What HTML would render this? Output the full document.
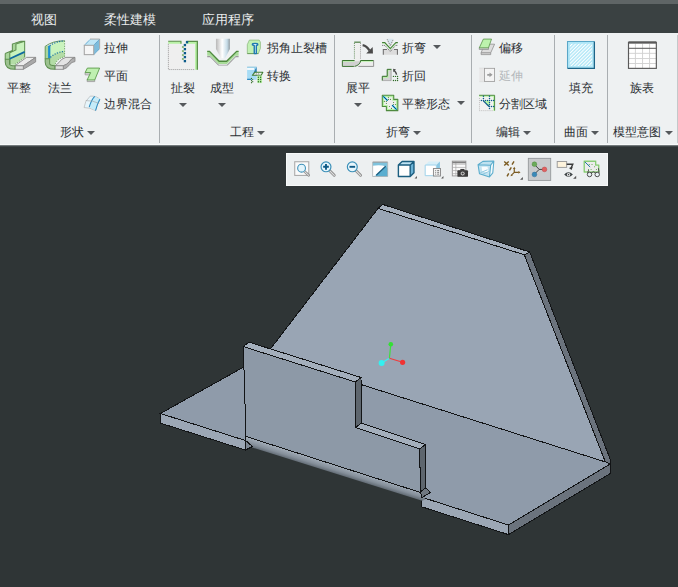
<!DOCTYPE html>
<html><head><meta charset="utf-8">
<style>
*{margin:0;padding:0;box-sizing:border-box}
html,body{width:678px;height:587px;overflow:hidden;background:#2f3536;font-family:"Liberation Sans",sans-serif}
.abs{position:absolute}
#topstrip{left:0;top:0;width:678px;height:4px;background:#5f6566}
#tabbar{left:0;top:4px;width:678px;height:29px;background:#3a4142}
.tab{position:absolute;top:8px;font-size:13px;line-height:15px;color:#e9eced;white-space:nowrap}
#ribbon{left:0;top:33px;width:678px;height:112px;background:#eef1f2;border-bottom:1px solid #f8fafa}
.sep{position:absolute;top:35px;width:1px;height:108px;background:#a9aeb1}
.t{position:absolute;font-size:12px;line-height:14px;color:#2b2f33;white-space:nowrap}
.dis{color:#b4b8bb}
.arr{position:absolute;width:0;height:0;border-left:4px solid transparent;border-right:4px solid transparent;border-top:4px solid #55595c}
svg.ic{position:absolute;overflow:visible}
#canvas{left:0;top:145px;width:678px;height:442px;background:#2f3536}
#vtb{left:286px;top:153px;width:322px;height:33px;background:#edf0f1;border:1px solid #f7f9f9}
</style></head>
<body>
<div id="topstrip" class="abs"></div>
<div id="tabbar" class="abs">
  <span class="tab" style="left:31px">视图</span>
  <span class="tab" style="left:104px">柔性建模</span>
  <span class="tab" style="left:202px">应用程序</span>
</div>
<div id="ribbon" class="abs"></div>
<div id="canvas" class="abs"></div>
<div class="abs" style="left:0;top:145px;width:678px;height:1px;background:#737a7c"></div>
<div class="abs" style="left:0;top:146px;width:678px;height:1px;background:#3f4647"></div>

<!-- separators -->
<div class="sep" style="left:159px"></div>
<div class="sep" style="left:334px"></div>
<div class="sep" style="left:471px"></div>
<div class="sep" style="left:554px"></div>
<div class="sep" style="left:607px"></div>
<div class="sep" style="left:677px;background:#c4c8ca"></div>

<!-- group labels & text -->
<span class="t" style="left:7px;top:81px">平整</span>
<span class="t" style="left:48px;top:81px">法兰</span>
<span class="t" style="left:104px;top:41px">拉伸</span>
<span class="t" style="left:104px;top:69px">平面</span>
<span class="t" style="left:104px;top:97px">边界混合</span>
<span class="t" style="left:60px;top:125px">形状</span><div class="arr" style="left:87px;top:131px"></div>

<span class="t" style="left:171px;top:81px">扯裂</span><div class="arr" style="left:179px;top:103px"></div>
<span class="t" style="left:210px;top:81px">成型</span><div class="arr" style="left:218px;top:103px"></div>
<span class="t" style="left:267px;top:41px">拐角止裂槽</span>
<span class="t" style="left:267px;top:69px">转换</span>
<span class="t" style="left:230px;top:125px">工程</span><div class="arr" style="left:257px;top:131px"></div>

<span class="t" style="left:346px;top:81px">展平</span><div class="arr" style="left:354px;top:103px"></div>
<span class="t" style="left:402px;top:41px">折弯</span><div class="arr" style="left:433px;top:45px"></div>
<span class="t" style="left:402px;top:69px">折回</span>
<span class="t" style="left:402px;top:97px">平整形态</span><div class="arr" style="left:457px;top:101px"></div>
<span class="t" style="left:386px;top:125px">折弯</span><div class="arr" style="left:413px;top:131px"></div>

<span class="t" style="left:499px;top:41px">偏移</span>
<span class="t dis" style="left:499px;top:69px">延伸</span>
<span class="t" style="left:499px;top:97px">分割区域</span>
<span class="t" style="left:496px;top:125px">编辑</span><div class="arr" style="left:523px;top:131px"></div>

<span class="t" style="left:569px;top:81px">填充</span>
<span class="t" style="left:564px;top:125px">曲面</span><div class="arr" style="left:591px;top:131px"></div>

<span class="t" style="left:630px;top:81px">族表</span>
<span class="t" style="left:613px;top:125px">模型意图</span><div class="arr" style="left:665px;top:131px"></div>


<!-- ribbon icons -->
<!-- 平整 -->
<svg class="ic" style="left:2px;top:36px" width="38" height="38" viewBox="0 0 587 587">
 <path d="M200 460 L330 460 L520 330 L380 330 Z" fill="#ececec" stroke="#8a8a8a" stroke-width="14"/>
 <path d="M330 460 L520 330 L520 400 L330 515 Z" fill="#a9a9a9" stroke="#8a8a8a" stroke-width="14"/>
 <path d="M200 460 L330 460 L330 515 L200 515 Z" fill="#e2e2e2" stroke="#8a8a8a" stroke-width="14"/>
 <path d="M120 260 L215 215 L215 125 L350 80 L350 330 L200 440 L120 440 Z" fill="#c9f3bd"/>
 <path d="M120 350 L350 245 L350 330 L200 440 L120 440 Z" fill="#b3dca6"/>
 <path d="M50 270 L120 260 L120 440 L50 440 Z" fill="#a9d69c"/>
 <path d="M160 125 L215 125 L215 215 L160 225 Z" fill="#a9d69c"/>
 <path d="M50 270 L160 225 L215 215 L120 260 Z M160 125 L290 80 L350 80 L215 125 Z" fill="#bfe8b1"/>
 <path d="M50 360 L120 360 L120 440 Q120 460 200 460 L200 515 Q50 515 50 400 Z" fill="#9cc28f" stroke="#5d8f4f" stroke-width="16"/>
 <path d="M50 270 L50 360 M120 260 L120 440 M50 270 L160 225 L160 125 L290 80 L350 80 L350 330 M120 260 L215 215 L215 125 L350 80" fill="none" stroke="#5d8f4f" stroke-width="16"/>
 <path d="M120 350 L350 245" stroke="#0f6aa0" stroke-width="26"/>
 <path d="M200 440 L350 330" stroke="#5d8f4f" stroke-width="12" stroke-dasharray="18 22"/>
</svg>
<!-- 法兰 -->
<svg class="ic" style="left:40px;top:36px" width="38" height="38" viewBox="0 0 587 587">
 <path d="M230 460 L360 460 Q420 440 450 400 Q480 350 540 330 L400 330 Q330 350 300 400 Q270 440 230 460 Z" fill="#e4e4e4" stroke="#8a8a8a" stroke-width="14"/>
 <path d="M360 460 Q420 440 450 400 Q480 350 540 330 L540 395 Q490 400 460 440 Q420 500 360 515 Z" fill="#b0b0b0" stroke="#8a8a8a" stroke-width="14"/>
 <path d="M230 460 L360 460 L360 515 L230 515 Z" fill="#e2e2e2" stroke="#8a8a8a" stroke-width="14"/>
 <path d="M150 150 Q250 80 380 75 L380 320 Q230 360 230 460 L150 460 Z" fill="#c9f3bd"/>
 <path d="M160 330 Q260 240 380 240 L380 320 Q230 360 230 460 L160 460 Z" fill="#b3dca6"/>
 <path d="M80 160 L150 150 L150 360 L80 360 Z" fill="#a9d69c"/>
 <path d="M125 150 L160 150 L160 350 L125 350 Z" fill="#1e8fd0"/>
 <path d="M80 350 L150 350 L150 430 Q150 460 230 460 L230 515 Q80 515 80 400 Z" fill="#9cc28f" stroke="#5d8f4f" stroke-width="16"/>
 <path d="M80 160 L80 350 M80 160 Q200 70 380 75" fill="none" stroke="#5d8f4f" stroke-width="14"/>
 <path d="M150 150 Q250 80 380 75 M160 330 Q260 240 380 240" fill="none" stroke="#0f6aa0" stroke-width="18" stroke-dasharray="18 22"/>
 <path d="M380 75 L380 320 Q260 350 230 450" fill="none" stroke="#5d8f4f" stroke-width="14" stroke-dasharray="16 22"/>
</svg>
<!-- 拉伸 -->
<svg class="ic" style="left:80px;top:36px" width="24" height="24" viewBox="0 0 587 587">
 <path d="M100 225 L245 75 L480 75 L335 225 Z" fill="#bfe6f6"/>
 <path d="M335 225 L480 75 L480 310 L335 460 Z" fill="#7dbcdc"/>
 <path d="M245 75 L480 75 L480 310" fill="none" stroke="#a8a8a8" stroke-width="24"/>
 <path d="M110 225 L245 85 M340 220 L475 85 M340 455 L475 315" stroke="#3f8fbf" stroke-width="22" stroke-dasharray="24 16"/>
 <rect x="105" y="228" width="230" height="228" fill="#f6f6f6" stroke="#a6a6a6" stroke-width="26"/>
</svg>
<!-- 平面 -->
<svg class="ic" style="left:80px;top:64px" width="24" height="24" viewBox="0 0 587 587">
 <path d="M175 380 L360 380 L360 430 L175 430 Z M125 215 L255 215 L255 265 L125 265 Z" fill="#e8e8e8" stroke="#8e8e8e" stroke-width="18"/>
 <path d="M180 100 L480 100 L360 390 L175 390 L260 210 L125 210 Z" fill="#bff0b0" stroke="#5a9a4a" stroke-width="22" stroke-linejoin="round"/>
</svg>
<!-- 边界混合 -->
<svg class="ic" style="left:80px;top:92px" width="24" height="24" viewBox="0 0 587 587">
 <path d="M250 100 Q420 95 485 180 Q420 300 380 455 Q250 380 100 380 Q110 220 250 100 Z" fill="#e6f5fb" stroke="#b0b0b0" stroke-width="16"/>
 <path d="M260 230 Q320 140 360 110 L485 180 Q420 300 380 455 L225 370 Z" fill="#c5ebf8"/>
 <path d="M360 110 Q280 190 225 370 M485 180 Q420 300 380 455" fill="none" stroke="#2a8ac0" stroke-width="26"/>
 <path d="M140 210 Q300 200 470 280" fill="none" stroke="#a0a0a0" stroke-width="14"/>
</svg>
<!-- 扯裂 -->
<svg class="ic" style="left:164px;top:36px" width="38" height="38" viewBox="0 0 587 587">
 <rect x="65" y="85" width="455" height="435" fill="#efefef"/>
 <path d="M68 120 L68 518 L480 518" fill="none" stroke="#8a8a8a" stroke-width="14" stroke-dasharray="14 17"/>
 <path d="M65 85 L270 85 L270 120 L65 120 Z" fill="#b9f2a6"/>
 <path d="M65 82 L270 82 M262 82 L262 120" stroke="#5b8f4a" stroke-width="16" fill="none"/>
 <path d="M345 85 L520 85 L520 520 L480 520 L480 120 L345 120 Z" fill="#b9f2a6"/>
 <path d="M345 82 L515 82 L515 520" stroke="#5b8f4a" stroke-width="20" fill="none"/>
 <g fill="#0c5a8a"><rect x="338" y="78" width="36" height="36"/><rect x="305" y="122" width="36" height="36"/><rect x="305" y="185" width="36" height="36"/><rect x="305" y="247" width="36" height="36"/><rect x="305" y="308" width="36" height="36"/><rect x="305" y="370" width="36" height="36"/></g>
 <g fill="#8ab97c"><rect x="277" y="155" width="30" height="30"/><rect x="277" y="218" width="30" height="30"/><rect x="277" y="280" width="30" height="30"/><rect x="277" y="340" width="30" height="30"/></g>
</svg>
<!-- 成型 -->
<svg class="ic" style="left:203px;top:34px" width="38" height="38" viewBox="0 0 587 587">
 <defs><linearGradient id="punch" x1="0" x2="1"><stop offset="0" stop-color="#b8b8b8"/><stop offset="0.45" stop-color="#ffffff"/><stop offset="0.8" stop-color="#c6dce8"/><stop offset="1" stop-color="#8f9aa0"/></linearGradient></defs>
 <path d="M200 75 L415 75 L415 230 L340 375 L280 375 L200 230 Z" fill="url(#punch)"/>
 <path d="M65 340 L110 340 L245 475 L370 475 L505 340 L550 340 L550 360 L505 360 L380 485 L235 485 L110 360 L65 360 Z" fill="#9a9a9a"/>
 <path d="M65 268 L100 268 L250 420 L365 420 L520 268 L550 268 L550 335 L500 335 L370 465 L240 465 L110 335 L65 335 Z" fill="#a9dc9a"/>
 <path d="M65 268 L100 268 L250 420 L365 420 L520 268 L550 268" fill="none" stroke="#4f8a3f" stroke-width="22"/>
</svg>
<!-- 拐角止裂槽 -->
<svg class="ic" style="left:242px;top:36px" width="24" height="24" viewBox="0 0 587 587">
 <path d="M180 100 L420 100 L450 150 L450 300 L400 430 L130 430 L130 210 Z" fill="#c2f1b4" stroke="#7fb070" stroke-width="16" stroke-linejoin="round"/>
 <path d="M130 430 L400 430" stroke="#6a9a5a" stroke-width="22"/>
 <path d="M255 215 Q250 180 320 180 Q390 180 385 215 L350 235 L350 430 L300 430 L300 235 Z" fill="#dff4fb" stroke="#1f78b0" stroke-width="34" stroke-linejoin="round"/>
</svg>
<!-- 转换 -->
<svg class="ic" style="left:242px;top:63px" width="24" height="24" viewBox="0 0 587 587">
 <rect x="125" y="100" width="235" height="310" fill="#a6dcf5"/>
 <rect x="125" y="120" width="170" height="50" fill="#ffffff" opacity="0.85"/>
 <path d="M125 100 L360 100" stroke="#8cc4dc" stroke-width="22"/>
 <path d="M125 400 L230 400" stroke="#2a85bf" stroke-width="30"/>
 <path d="M270 260 L355 100 L362 240 Z" fill="#2f7db0"/>
 <path d="M252 300 L320 225 L510 225 L470 300 Z" fill="#f2f6f0" stroke="#3d7a30" stroke-width="26" stroke-linejoin="round"/>
 <path d="M375 310 L375 490 L490 490 L490 310 Z" fill="#b8f2a5"/>
 <g fill="#2f6a25"><circle cx="400" cy="350" r="17"/><circle cx="455" cy="350" r="17"/><circle cx="400" cy="405" r="17"/><circle cx="455" cy="405" r="17"/><circle cx="400" cy="458" r="17"/><circle cx="455" cy="458" r="17"/><circle cx="232" cy="378" r="15"/><circle cx="262" cy="405" r="15"/><circle cx="232" cy="432" r="15"/><circle cx="262" cy="458" r="15"/><circle cx="232" cy="482" r="15"/></g>
 <g fill="#909090"><circle cx="350" cy="268" r="16"/><circle cx="405" cy="268" r="16"/></g>
</svg>
<!-- 展平 -->
<svg class="ic" style="left:339px;top:36px" width="38" height="38" viewBox="0 0 587 587">
 <rect x="235" y="95" width="100" height="290" fill="#efefef"/>
 <path d="M52 378 L535 378 L535 470 L52 470 Z" fill="#ececec"/>
 <path d="M52 390 L240 390 Q330 390 330 378 L330 400 Q300 470 240 470 L52 470 Z" fill="#d0d0d0"/>
 <path d="M52 378 L240 378 M330 378 L535 378" stroke="#2f6a25" stroke-width="18"/>
 <path d="M60 392 L240 392 M335 392 L530 392" stroke="#b7f5a3" stroke-width="12"/>
 <path d="M52 378 L52 470 L230 470" fill="none" stroke="#2f6a25" stroke-width="14"/>
 <path d="M535 378 L535 470 L300 470" fill="none" stroke="#8a8a8a" stroke-width="14"/>
 <path d="M235 95 L335 95" stroke="#2f6a25" stroke-width="16"/>
 <path d="M238 110 L238 360" stroke="#2f6a25" stroke-width="12" stroke-dasharray="14 18"/>
 <path d="M332 110 L332 360" stroke="#777" stroke-width="12" stroke-dasharray="14 18"/>
 <path d="M240 470 Q320 450 335 385" fill="none" stroke="#2f6a25" stroke-width="14"/>
 <path d="M365 140 Q430 150 470 225" fill="none" stroke="#4a4a4a" stroke-width="36"/>
 <path d="M420 270 L525 270 L520 170 Z" fill="#4a4a4a"/>
</svg>
<!-- 折弯 small -->
<svg class="ic" style="left:378px;top:36px" width="24" height="24" viewBox="0 0 587 587">
 <path d="M130 330 L475 330 L475 460 L130 460 Z" fill="#dcdcdc"/>
 <path d="M130 460 L130 330 L220 330 M390 330 L475 330 L475 460" fill="none" stroke="#6e6e6e" stroke-width="26"/>
 <path d="M225 70 L300 240 L375 70 Z" fill="#d8e6ee"/>
 <path d="M225 80 L300 240 L375 80" fill="none" stroke="#777" stroke-width="22" stroke-dasharray="30 20"/>
 <path d="M100 230 L170 230 L300 380 L430 230 L485 230" fill="none" stroke="#6e6e6e" stroke-width="22" stroke-dasharray="30 18"/>
 <path d="M100 160 L165 160 L300 310 L440 160 L485 160" fill="none" stroke="#3f7a32" stroke-width="30"/>
 <path d="M110 180 L160 180 L300 330 L440 180" fill="none" stroke="#aef59a" stroke-width="12"/>
</svg>
<!-- 折回 -->
<svg class="ic" style="left:378px;top:63px" width="24" height="24" viewBox="0 0 587 587">
 <path d="M105 325 L225 325 L225 155 L330 155 L330 430 L105 430 Z" fill="#d4d4d4"/>
 <path d="M120 345 L240 345 L240 170 L315 170" fill="none" stroke="#b4f7a0" stroke-width="26"/>
 <path d="M105 430 L105 325 L225 325 L225 155 L330 155" fill="none" stroke="#2f6a25" stroke-width="24"/>
 <path d="M110 430 L320 430 L320 170" fill="none" stroke="#8a8a8a" stroke-width="14"/>
 <path d="M455 285 Q440 220 400 190" fill="none" stroke="#454545" stroke-width="34"/>
 <path d="M370 140 L440 160 L375 225 Z" fill="#454545"/>
 <g fill="#2f6a25"><circle cx="378" cy="328" r="17"/><circle cx="428" cy="328" r="17"/><circle cx="478" cy="328" r="17"/><circle cx="478" cy="378" r="17"/><circle cx="378" cy="428" r="17"/><circle cx="428" cy="428" r="17"/><circle cx="478" cy="428" r="17"/></g>
</svg>
<!-- 平整形态 -->
<svg class="ic" style="left:378px;top:91px" width="24" height="24" viewBox="0 0 587 587">
 <path d="M105 105 L385 105 L385 205 L485 205 L485 480 L205 480 L205 380 L105 380 Z" fill="#b5f2a2" stroke="#4f8a3f" stroke-width="26" stroke-linejoin="round"/>
 <path d="M150 150 L350 150 L350 240 L440 240 L440 440 L240 440 L240 345 L150 345 Z" fill="#eeeeee"/>
 <path d="M130 130 L235 235 M345 345 L455 455" stroke="#38c0f0" stroke-width="44"/>
 <path d="M130 130 L235 235 M345 345 L455 455" stroke="#0f4f7a" stroke-width="24"/>
 <g fill="#4f8a3f"><circle cx="255" cy="155" r="14"/><circle cx="255" cy="205" r="14"/><circle cx="305" cy="205" r="14"/><circle cx="155" cy="255" r="14"/><circle cx="205" cy="255" r="14"/><circle cx="205" cy="305" r="14"/><circle cx="280" cy="380" r="14"/><circle cx="330" cy="425" r="14"/><circle cx="380" cy="280" r="14"/><circle cx="380" cy="330" r="14"/><circle cx="430" cy="330" r="14"/></g>
</svg>
<!-- 偏移 -->
<svg class="ic" style="left:476px;top:36px" width="24" height="24" viewBox="0 0 587 587">
 <path d="M125 410 L360 410 L360 455 L125 455 Z" fill="#e4e4e4" stroke="#8a8a8a" stroke-width="18"/>
 <path d="M210 200 L455 200 L360 410 L125 410 Z" fill="#dddddd" stroke="#8a8a8a" stroke-width="18"/>
 <path d="M80 290 L305 290 L305 330 L80 330 Z" fill="#ececec" stroke="#8a8a8a" stroke-width="18"/>
 <path d="M180 75 L380 75 L305 290 L80 290 Z" fill="#bdf2ad" stroke="#4f8a3f" stroke-width="18"/>
</svg>
<!-- 延伸 disabled -->
<svg class="ic" style="left:476px;top:63px" width="24" height="24" viewBox="0 0 587 587">
 <rect x="80" y="125" width="130" height="330" fill="#e8e8e8"/>
 <path d="M80 125 L210 125 M80 455 L210 455" stroke="#d6d6d6" stroke-width="14"/>
 <rect x="210" y="130" width="245" height="320" fill="#f4f4f4" stroke="#9a9a9a" stroke-width="20"/>
 <path d="M275 290 L340 290" stroke="#9a9a9a" stroke-width="44"/>
 <path d="M330 230 L405 290 L330 350 Z" fill="#9a9a9a"/>
</svg>
<!-- 分割区域 -->
<svg class="ic" style="left:476px;top:91px" width="24" height="24" viewBox="0 0 587 587">
 <rect x="80" y="105" width="380" height="375" fill="#f1f1f1"/>
 <path d="M80 105 L455 105 L455 480 L420 480 L420 140 L80 140 Z" fill="#b8f7a5"/>
 <path d="M75 105 L455 105 L455 480" fill="none" stroke="#4f8a3f" stroke-width="24"/>
 <path d="M185 240 L330 240 L330 380 Z" fill="#b8f7a5"/>
 <path d="M85 180 L85 480 L420 480" fill="none" stroke="#888" stroke-width="18" stroke-dasharray="16 34"/>
 <path d="M180 240 L320 380" stroke="#0c5a8a" stroke-width="30"/>
 <g fill="#0c5a8a"><circle cx="182" cy="130" r="18"/><circle cx="182" cy="182" r="18"/><circle cx="132" cy="232" r="18"/><circle cx="182" cy="232" r="18"/><circle cx="232" cy="232" r="18"/><circle cx="282" cy="232" r="18"/><circle cx="330" cy="232" r="18"/><circle cx="380" cy="232" r="18"/><circle cx="430" cy="232" r="18"/><circle cx="330" cy="130" r="18"/><circle cx="330" cy="182" r="18"/><circle cx="330" cy="280" r="18"/><circle cx="330" cy="330" r="18"/><circle cx="330" cy="380" r="18"/><circle cx="380" cy="380" r="18"/><circle cx="430" cy="380" r="18"/><circle cx="330" cy="428" r="18"/></g>
</svg>
<!-- 填充 -->
<svg class="ic" style="left:562px;top:36px" width="38" height="38" viewBox="0 0 587 587">
 <defs><pattern id="hatch" width="38" height="38" patternUnits="userSpaceOnUse" patternTransform="rotate(45)"><rect width="38" height="38" fill="#aee6f7"/><rect x="0" y="0" width="17" height="38" fill="#ffffff"/></pattern></defs>
 <rect x="85" y="85" width="415" height="415" fill="#aee6f7"/>
 <rect x="120" y="120" width="345" height="345" fill="url(#hatch)"/>
 <path d="M85 500 L85 85 L500 85" fill="none" stroke="#5aa7c8" stroke-width="16"/>
 <path d="M85 500 L500 500 L500 85" fill="none" stroke="#1d6488" stroke-width="20"/>
</svg>
<!-- 族表 -->
<svg class="ic" style="left:623px;top:36px" width="38" height="38" viewBox="0 0 587 587">
 <rect x="85" y="100" width="430" height="400" fill="#ffffff"/>
 <path d="M90 268 L510 268 M90 348 L510 348 M90 425 L510 425 M192 120 L192 495 M302 120 L302 495 M410 120 L410 495" stroke="#cfcfcf" stroke-width="14"/>
 <path d="M85 190 L515 190" stroke="#5a5a5a" stroke-width="16"/>
 <path d="M85 100 L515 100" stroke="#5a5a5a" stroke-width="36"/>
 <rect x="85" y="100" width="430" height="400" fill="none" stroke="#5a5a5a" stroke-width="18"/>
</svg>

<!-- view toolbar -->
<div id="vtb" class="abs"></div>


<!-- toolbar icons: group A -->
<svg class="ic" style="left:288px;top:155px" width="80" height="30" viewBox="0 0 678 254">
 <rect x="57" y="57" width="119" height="116" fill="#fafafa" stroke="#a9a9a9" stroke-width="9"/>
 <path d="M128 128 L175 172" stroke="#8a8a8a" stroke-width="22" stroke-linecap="round"/>
 <path d="M128 128 L175 172" stroke="#e0e0e0" stroke-width="9" stroke-linecap="round"/>
 <circle cx="115" cy="112" r="33" fill="#e3f4fb" stroke="#3a8fb8" stroke-width="9"/>
 <path d="M352 132 L392 172" stroke="#8a8a8a" stroke-width="24" stroke-linecap="round"/>
 <path d="M352 132 L392 172" stroke="#e0e0e0" stroke-width="10" stroke-linecap="round"/>
 <circle cx="322" cy="100" r="42" fill="#e8f6fc" stroke="#3a8fb8" stroke-width="10"/>
 <path d="M298 100 L346 100 M322 76 L322 124" stroke="#0f5a86" stroke-width="16"/>
 <path d="M575 132 L615 172" stroke="#8a8a8a" stroke-width="24" stroke-linecap="round"/>
 <path d="M575 132 L615 172" stroke="#e0e0e0" stroke-width="10" stroke-linecap="round"/>
 <circle cx="545" cy="100" r="42" fill="#e8f6fc" stroke="#3a8fb8" stroke-width="10"/>
 <path d="M521 100 L569 100" stroke="#0f5a86" stroke-width="16"/>
</svg>
<svg class="ic" style="left:365px;top:155px" width="80" height="30" viewBox="0 0 678 254">
 <defs><linearGradient id="shd" x1="0" y1="0" x2="1" y2="1"><stop offset="0.3" stop-color="#ffffff"/><stop offset="1" stop-color="#5aaed0"/></linearGradient></defs>
 <rect x="65" y="60" width="127" height="122" fill="#7fc3dd"/>
 <path d="M65 182 L65 90 Q130 80 175 95 L95 172 Z" fill="#ffffff"/>
 <path d="M175 95 L192 115 L192 182 L95 182 L95 172 Z" fill="#5aaed0"/>
 <path d="M65 60 L192 60" stroke="#9a9a9a" stroke-width="10"/>
 <path d="M65 60 L65 182 L192 182 L192 60" fill="none" stroke="#b0b0b0" stroke-width="6"/>
 <path d="M95 172 L175 95" stroke="#1b5e80" stroke-width="11"/>
 <path d="M283 85 L315 55 L415 55 L383 85 Z" fill="#bfe3f3"/>
 <path d="M383 85 L415 55 L415 150 L383 182 Z" fill="#6bb2d6"/>
 <path d="M283 85 L383 85 L383 182 L283 182 Z" fill="#ffffff"/>
 <path d="M283 85 L315 55 L415 55 L415 150 L383 182 L283 182 Z M283 85 L383 85 L415 55 M383 85 L383 182" fill="none" stroke="#1b5e80" stroke-width="12" stroke-linejoin="round"/>
 <path d="M420 198 L440 178 L440 198 Z" fill="#555"/>
 <path d="M510 85 L540 55 L635 55 L605 85 Z" fill="#d6eef8"/>
 <path d="M605 85 L635 55 L635 150 L605 175 Z" fill="#8cc8e4"/>
 <path d="M510 85 L605 85 L605 175 L510 175 Z" fill="#ffffff" stroke="#9ad0ea" stroke-width="8"/>
 <rect x="580" y="114" width="60" height="64" fill="#f4f4f4" stroke="#8a8a8a" stroke-width="8"/>
 <path d="M595 132 L603 132 M612 132 L628 132 M595 147 L603 147 M612 147 L628 147 M595 162 L603 162 M612 162 L628 162" stroke="#666" stroke-width="7"/>
 <path d="M645 198 L665 178 L665 198 Z" fill="#555"/>
</svg>
<svg class="ic" style="left:445px;top:155px" width="80" height="30" viewBox="0 0 678 254">
 <rect x="62" y="52" width="115" height="125" fill="#fafafa" stroke="#9a9a9a" stroke-width="8"/>
 <path d="M62 78 L177 78 M62 105 L177 105 M62 132 L177 132 M62 158 L120 158 M92 52 L92 177" stroke="#a8a8a8" stroke-width="6"/>
 <path d="M62 63 L177 63" stroke="#808080" stroke-width="14"/>
 <rect x="105" y="130" width="90" height="55" rx="8" fill="#3a3a3a"/>
 <rect x="130" y="118" width="35" height="16" fill="#3a3a3a"/>
 <circle cx="150" cy="157" r="20" fill="#d0d0d0" stroke="#3a3a3a" stroke-width="6"/>
 <circle cx="150" cy="157" r="9" fill="#3a3a3a"/>
 <path d="M280 82 L321 54 L414 51 L405 151 L377 186 L292 158 Z" fill="#dff1f8"/>
 <path d="M321 54 L414 51 L387 86 L280 82 Z" fill="#bfe2f0"/>
 <path d="M387 86 L414 51 L405 151 L377 186 Z" fill="#f4fbfd"/>
 <path d="M292 158 L377 186 L387 86 L280 82 Z" fill="#c4e4f1"/>
 <path d="M310 100 L360 100 L370 150 L315 140 Z" fill="#ffffff" opacity="0.9"/>
 <path d="M300 150 L360 125 M315 165 L372 140" stroke="#8cc6df" stroke-width="8"/>
 <path d="M280 82 L321 54 L414 51 L405 151 L377 186 L292 158 Z M280 82 L387 86 L414 51 M387 86 L377 186" fill="none" stroke="#5aaccc" stroke-width="9" stroke-linejoin="round"/>
 <path d="M502 55 L540 89 M540 55 L502 89" stroke="#7a5a20" stroke-width="12"/>
 <path d="M585 54 L568 82 M562 104 L546 131 M540 155 L526 181" stroke="#7a5a20" stroke-width="12"/>
 <path d="M587 115 L587 147 L625 147 M587 147 L568 166" fill="none" stroke="#7a5a20" stroke-width="10"/>
 <path d="M576 118 L587 100 L598 118 Z M622 136 L640 147 L622 158 Z M560 160 L556 180 L576 174 Z" fill="#7a5a20"/>
 <path d="M636 209 L660 186 L660 209 Z" fill="#555"/>
</svg>
<svg class="ic" style="left:525px;top:155px" width="80" height="30" viewBox="0 0 678 254">
 <rect x="28" y="28" width="190" height="187" fill="#c8cacc" stroke="#8f9396" stroke-width="7"/>
 <path d="M80 80 L120 122 L80 162 M120 122 L165 122" fill="none" stroke="#3a3a3a" stroke-width="8"/>
 <circle cx="80" cy="78" r="20" fill="#6bab5a" stroke="#4a8a3a" stroke-width="4"/>
 <circle cx="165" cy="122" r="20" fill="#e06060" stroke="#b84040" stroke-width="4"/>
 <circle cx="80" cy="165" r="20" fill="#3a8ab8" stroke="#2a6a98" stroke-width="4"/>
 <rect x="273" y="55" width="80" height="50" fill="#fdf3dc" stroke="#9a9a9a" stroke-width="8"/>
 <path d="M353 78 L405 78 L390 112" fill="none" stroke="#3a3a3a" stroke-width="12"/>
 <path d="M372 110 L395 128 L405 100 Z" fill="#3a3a3a"/>
 <path d="M332 166 Q368 128 406 166 Q368 204 332 166 Z" fill="#3c4244"/>
 <circle cx="369" cy="166" r="14" fill="#ffffff"/><circle cx="369" cy="166" r="7" fill="#3c4244"/>
 <path d="M408 202 L434 176 L434 202 Z" fill="#555"/>
 <path d="M502 53 L599 53 L599 85 L625 85 L625 144 L502 144 Z" fill="#ececec"/>
 <path d="M502 53 L599 53 L599 85 L625 85 L625 144 L502 144 Z" fill="none" stroke="#9ee08a" stroke-width="11"/>
 <path d="M502 53 L599 53 L599 85 L625 85 L625 144 L502 144 Z" fill="none" stroke="#5a9a4a" stroke-width="3"/>
 <path d="M508 59 L552 102" stroke="#1b6ea0" stroke-width="8"/>
 <g fill="#4f9a3f"><circle cx="545" cy="80" r="4.5"/><circle cx="568" cy="80" r="4.5"/><circle cx="590" cy="100" r="4.5"/><circle cx="538" cy="122" r="4.5"/><circle cx="560" cy="122" r="4.5"/><circle cx="605" cy="122" r="4.5"/></g>
 <path d="M530 150 L540 128 M628 150 L622 112 M560 152 Q580 132 600 152" fill="none" stroke="#444" stroke-width="8"/>
 <circle cx="547" cy="165" r="19" fill="#e9f2f5" stroke="#444" stroke-width="8"/>
 <circle cx="612" cy="165" r="19" fill="#e9f2f5" stroke="#444" stroke-width="8"/>
</svg>

<!-- 3D model -->
<svg class="abs" style="left:0;top:0" width="678" height="587" viewBox="0 0 678 587">
<defs><linearGradient id="bend" gradientUnits="userSpaceOnUse" x1="333" y1="463.5" x2="330.2" y2="472.5"><stop offset="0" stop-color="#a6b0bb"/><stop offset="0.6" stop-color="#858f9a"/><stop offset="1" stop-color="#5d666f"/></linearGradient></defs>
<g shape-rendering="crispEdges">
<polygon points="160.4,413.5 266.2,354.5 605.3,461.9 610.5,463.8 508.4,525.0 421.7,497.2 420.3,492.4 246.0,436.5 245.4,440.5" fill="#8f9baa" stroke="#121416" stroke-width="1"/>
<polygon points="160.4,413.5 245.4,440.5 245.4,450.1 160.4,423.1" fill="#9ca7b5" stroke="#121416" stroke-width="1"/>
<polygon points="421.7,497.2 508.4,525.0 508.4,534.6 421.7,506.8" fill="#9ca7b5" stroke="#121416" stroke-width="1"/>
<polygon points="508.4,525.0 610.5,463.8 610.5,473.4 508.4,534.6" fill="#6b737d" stroke="#121416" stroke-width="1"/>
<polygon points="378.1,208.4 524.3,254.8 605.3,461.9 266.2,354.5" fill="#99a5b4" stroke="#121416" stroke-width="1"/>
<polygon points="378.1,208.4 382.6,204.4 529.7,252.0 524.3,254.8" fill="#a4afbc" stroke="#121416" stroke-width="1"/>
<polygon points="524.3,254.8 529.7,252.0 610.5,460.0 610.5,463.8 605.3,461.9" fill="#6b737d" stroke="#121416" stroke-width="1"/>
</g>
<polygon points="246.0,436.5 420.3,492.4 425.5,499.5 422.0,500.8 251.5,447.3 246,447" fill="url(#bend)"/>
<g shape-rendering="crispEdges">
<line x1="246.0" y1="436.5" x2="420.3" y2="492.4" stroke="#121416" stroke-width="1"/>
<polygon points="243.3,346.6 355.4,382.0 355.6,427.6 419.8,449.0 420.3,492.4 246.0,436.5" fill="#8d99a7" stroke="#121416" stroke-width="1"/>
<polygon points="243.3,346.6 248.9,342.1 361.0,377.5 355.4,382.0" fill="#a4afbc" stroke="#121416" stroke-width="1"/>
<polygon points="355.4,382.0 361.0,377.5 361.2,423.1 355.6,427.6" fill="#5e666e" stroke="#121416" stroke-width="1"/>
<polygon points="355.6,427.6 361.2,423.1 425.4,444.5 419.8,449.0" fill="#a4afbc" stroke="#121416" stroke-width="1"/>
<polygon points="419.8,449.0 425.4,444.5 425.9,487.9 420.3,492.4" fill="#5e666e" stroke="#121416" stroke-width="1"/>
</g>
<g shape-rendering="crispEdges">
<polygon points="420.3,491.9 425.6,487.9 430.5,492.4 421.9,497.5" fill="#6f7780" stroke="#121416" stroke-width="1"/>
<polygon points="246.0,440.8 252.5,446.5 245.5,450" fill="#7d8793" stroke="#121416" stroke-width="1"/>
<line x1="245.2" y1="436" x2="245.2" y2="450.5" stroke="#121416" stroke-width="1"/>
</g>
<g stroke-width="1.2"><line x1="389.4" y1="358.2" x2="390.8" y2="344.2" stroke="#3ce03c"/><line x1="389.4" y1="358.2" x2="381.6" y2="363" stroke="#3cf0f0"/><line x1="389.4" y1="358.2" x2="402.6" y2="362.3" stroke="#f03c3c"/></g>
<circle cx="390.8" cy="344.2" r="2.3" fill="#33e033"/><circle cx="381.6" cy="363" r="3" fill="#33f0f0"/><circle cx="402.6" cy="362.3" r="2.6" fill="#f03333"/>
</svg>
</body></html>
